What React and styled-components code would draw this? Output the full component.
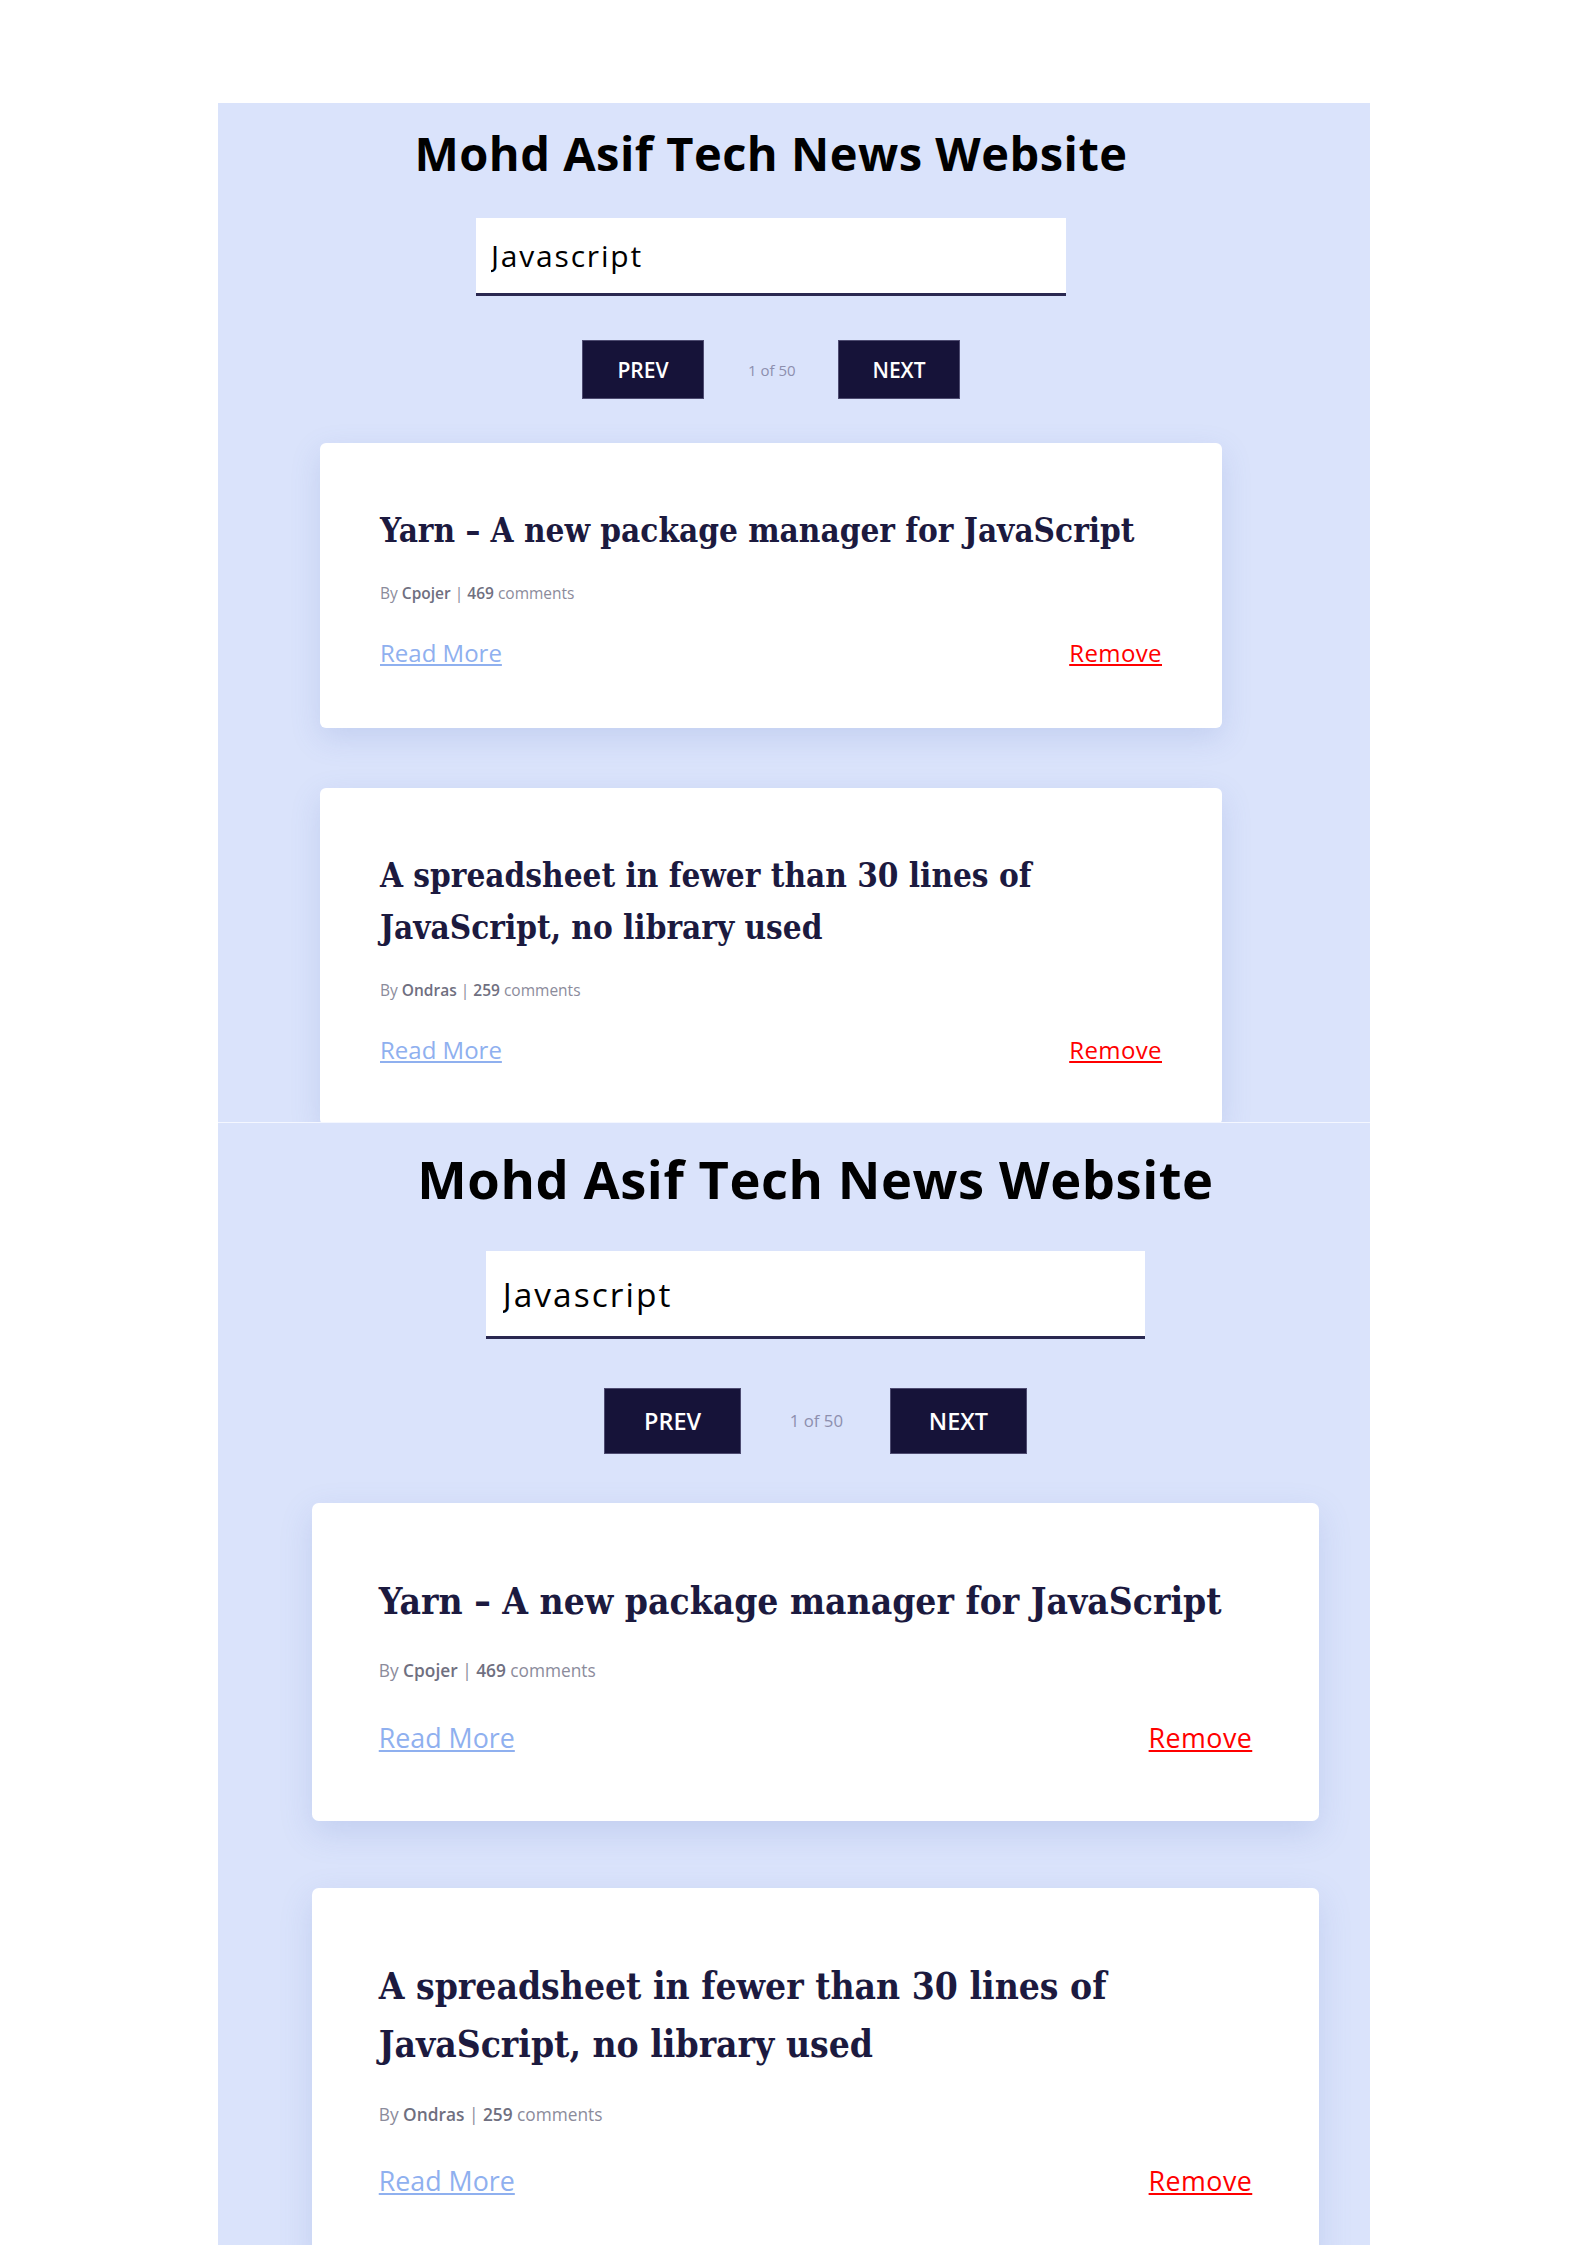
import React from "react";
import styled, { createGlobalStyle } from "styled-components";

const GlobalStyle = createGlobalStyle`
	html, body {
		margin: 0;
		padding: 0;
		background: #ffffff;
	}
	body {
		width: 1587px;
		height: 2245px;
		overflow: hidden;
	}
`;

const Page = styled.div`
	height: 2245px;
	box-sizing: border-box;
	padding-top: 103px;
	display: flex;
	justify-content: center;
`;

const Panel = styled.div`
	width: 1152px;
	background: #dae3fb;
	display: flex;
	flex-direction: column;
`;

// one captured frame of the app; $shift moves its centre left (-) or right (+)
const Frame = styled.section`
	height: ${p => p.$height}px;
	flex-shrink: 0;
	box-sizing: border-box;
	overflow: hidden;
	display: flex;
	align-items: flex-start;
	justify-content: center;
	padding-left: ${p => (p.$shift > 0 ? p.$shift * 2 : 0)}px;
	padding-right: ${p => (p.$shift < 0 ? -p.$shift * 2 : 0)}px;
	border-top: ${p => (p.$divider ? "1px solid #f4f7ff" : "none")};
`;

const Screen = styled.div`
	zoom: ${p => p.$scale};
	width: 960px;
	flex-shrink: 0;
	display: flex;
	flex-direction: column;
	align-items: center;
	padding-top: 18px;
	font-family: "Open Sans", "Liberation Sans", sans-serif;
	& > * {
		flex-shrink: 0;
	}
`;

const Heading = styled.h1`
	margin: 0;
	font-size: 47px;
	line-height: 64px;
	font-weight: 700;
	color: #000;
	letter-spacing: 0.5px;
`;

const SearchBox = styled.div`
	width: 590px;
	height: 78px;
	box-sizing: border-box;
	margin-top: 33px;
	padding: 0 15px;
	display: flex;
	align-items: center;
	background: #fff;
	border-bottom: 3px solid #2a2850;
`;

const SearchField = styled.input`
	flex: 1;
	min-width: 0;
	height: 100%;
	padding: 0;
	border: none;
	background: transparent;
	outline: none;
	font-family: inherit;
	font-size: 30px;
	letter-spacing: 1.8px;
	color: #000;
`;

const Pager = styled.div`
	margin-top: 44px;
	display: flex;
	align-items: center;
	gap: 44px;
`;

const PagerButton = styled.button`
	width: 122px;
	height: 59px;
	box-sizing: border-box;
	background: #161339;
	border: 1px solid #4d4b70;
	color: #fff;
	font-family: inherit;
	font-size: 21px;
	font-weight: 600;
	cursor: pointer;
`;

const PageLabel = styled.span`
	width: 46px;
	text-align: center;
	font-size: 15px;
	color: #8d8fae;
	white-space: nowrap;
`;

const CardList = styled.div`
	margin-top: 44px;
	width: 902px;
	display: flex;
	flex-direction: column;
	gap: 60px;
`;

const Card = styled.article`
	background: #fff;
	border-radius: 6px;
	padding: 62px 60px 60px;
	box-shadow: 0 10px 30px rgba(86, 116, 196, 0.18);
`;

const CardTitle = styled.h2`
	margin: 0;
	font-family: "DejaVu Serif", "Liberation Serif", serif;
	font-stretch: condensed;
	font-size: 33px;
	line-height: 52px;
	font-weight: 700;
	color: #1c1a3f;
`;

const Meta = styled.p`
	margin: 26px 0 0;
	font-size: 15.5px;
	line-height: 20px;
	color: #8b8b9b;
	b {
		color: #6f6f80;
		font-weight: 600;
	}
`;

const Actions = styled.div`
	margin-top: 35px;
	display: flex;
	justify-content: space-between;
	line-height: 30px;
	font-size: 24px;
`;

const TextLink = styled.a`
	color: ${p => (p.$danger ? "#ff0000" : "#8fb0ef")};
	text-decoration: underline;
	letter-spacing: ${p => (p.$danger ? "0.4px" : "0")};
`;

const stories = [
	{ title: "Yarn – A new package manager for JavaScript", author: "Cpojer", comments: 469 },
	{ title: "A spreadsheet in fewer than 30 lines of JavaScript, no library used", author: "Ondras", comments: 259 },
];

function NewsScreen({ scale }) {
	return (
		<Screen $scale={scale}>
			<Heading>Mohd Asif Tech News Website</Heading>
			<SearchBox>
				<SearchField type="text" defaultValue="Javascript" />
			</SearchBox>
			<Pager>
				<PagerButton>PREV</PagerButton>
				<PageLabel>1 of 50</PageLabel>
				<PagerButton>NEXT</PagerButton>
			</Pager>
			<CardList>
				{stories.map((item, index) => (
					<Card key={index}>
						<CardTitle>{item.title}</CardTitle>
						<Meta>
							By <b>{item.author}</b> | <b>{item.comments}</b> comments
						</Meta>
						<Actions>
							<TextLink href="#">Read More</TextLink>
							<TextLink href="#" $danger>Remove</TextLink>
						</Actions>
					</Card>
				))}
			</CardList>
		</Screen>
	);
}

export default function App() {
	return (
		<>
			<GlobalStyle />
			<Page>
				<Panel>
					<Frame $height={1019} $shift={-22.5}>
						<NewsScreen scale={1} />
					</Frame>
					<Frame $height={1123} $shift={22} $divider>
						<NewsScreen scale={1.117} />
					</Frame>
				</Panel>
			</Page>
		</>
	);
}
